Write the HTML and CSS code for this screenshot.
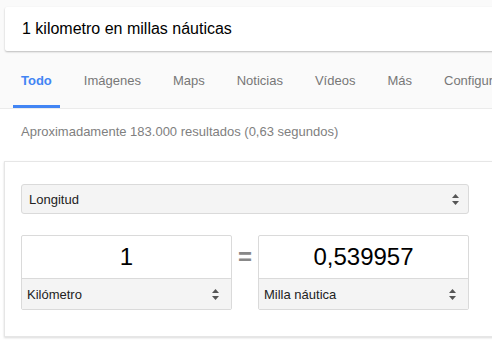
FILE: index.html
```html
<!DOCTYPE html>
<html lang="es">
<head>
    <meta charset="UTF-8">
    <title>1 kilometro en millas náuticas</title>
    <link rel="stylesheet" href="styles.css">
</head>
<body>
    <div class="header">
        <div class="search-box">1 kilometro en millas náuticas</div>
        <div class="tabs">
            <a class="tab active" href="#">Todo</a>
            <a class="tab" href="#">Imágenes</a>
            <a class="tab" href="#">Maps</a>
            <a class="tab" href="#">Noticias</a>
            <a class="tab" href="#">Vídeos</a>
            <a class="tab" href="#">Más</a>
            <a class="tab" href="#">Configuración</a>
        </div>
    </div>

    <div class="results-info">Aproximadamente 183.000 resultados (0,63 segundos)</div>

    <div class="card">
        <div class="select wide">
            <span>Longitud</span>
            <svg class="arrows" width="7" height="11" viewBox="0 0 7 11"><path d="M3.5 0L7 4H0z M0 7h7L3.5 11z" fill="#555"/></svg>
        </div>

        <div class="converter">
            <div class="unit-box">
                <div class="value">1</div>
                <div class="select unit">
                    <span>Kilómetro</span>
                    <svg class="arrows" width="7" height="11" viewBox="0 0 7 11"><path d="M3.5 0L7 4H0z M0 7h7L3.5 11z" fill="#555"/></svg>
                </div>
            </div>
            <div class="equals">=</div>
            <div class="unit-box">
                <div class="value">0,539957</div>
                <div class="select unit">
                    <span>Milla náutica</span>
                    <svg class="arrows" width="7" height="11" viewBox="0 0 7 11"><path d="M3.5 0L7 4H0z M0 7h7L3.5 11z" fill="#555"/></svg>
                </div>
            </div>
        </div>
    </div>

    <div class="more-info">Más información</div>
</body>
</html>
```

FILE: styles.css
```css
body {
    margin: 0;
    font-family: "Liberation Sans", Arial, sans-serif;
    background-color: #fff;
    color: #222;
    overflow: hidden;
}

.header {
    background-color: #fafafa;
    padding-top: 7px;
    border-bottom: 1px solid #ebebeb;
}

.search-box {
    margin-left: 5px;
    width: 600px;
    height: 44px;
    line-height: 44px;
    padding-left: 17px;
    background-color: #fff;
    border-radius: 2px;
    box-shadow: 0 1px 2px rgba(0, 0, 0, 0.25);
    font-size: 16px;
    color: #000;
}

.tabs {
    display: flex;
    gap: 16px;
    margin-top: 10px;
    padding-left: 13px;
    white-space: nowrap;
}

.tab {
    padding: 12px 8px 16px;
    line-height: 16px;
    font-size: 13px;
    color: #777;
    text-decoration: none;
    border-bottom: 3px solid transparent;
}

.tab.active {
    color: #4285f4;
    font-weight: bold;
    border-bottom-color: #4285f4;
}

.results-info {
    padding: 15px 0 0 21px;
    line-height: 16px;
    font-size: 13px;
    color: #808080;
}

.card {
    margin: 21px 0 0 4px;
    width: 600px;
    padding: 22px 0 26px 16px;
    border: 1px solid #e6e6e6;
    box-shadow: 0 1px 2px rgba(0, 0, 0, 0.15);
}

.select {
    display: flex;
    align-items: center;
    justify-content: space-between;
    background-color: #f4f4f4;
    font-size: 13px;
    color: #222;
}

.select.wide {
    width: 448px;
    height: 30px;
    box-sizing: border-box;
    padding: 0 9px 0 7px;
    border: 1px solid #dadada;
    border-radius: 3px;
}

.converter {
    display: flex;
    align-items: flex-start;
    margin-top: 21px;
}

.unit-box {
    width: 211px;
    box-sizing: border-box;
    border: 1px solid #dadada;
    border-radius: 2px;
    background-color: #fff;
}

.value {
    height: 42px;
    line-height: 42px;
    text-align: center;
    font-size: 24px;
    color: #000;
    border-bottom: 1px solid #dadada;
}

.select.unit {
    height: 30px;
    padding: 0 12px 0 5px;
}

.equals {
    width: 26px;
    text-align: center;
    font-size: 24px;
    font-weight: bold;
    color: #888;
    line-height: 44px;
}

.more-info {
    margin: 9px 0 0 32px;
    font-size: 13px;
    color: #777;
}
```
